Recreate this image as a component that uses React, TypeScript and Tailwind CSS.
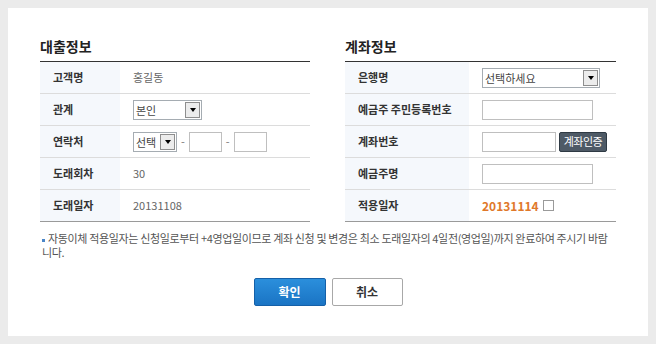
const font = { fontFamily: '"Noto Sans CJK KR", "Noto Sans", sans-serif' };

const Select = ({ label, width }: { label: string; width: string }) => (
  <div className={`flex h-[20px] ${width} items-stretch border border-[#a5acb2] bg-white`}>
    <span className="flex-1 pl-[2px] text-[11px] leading-[18px] text-[#444]">{label}</span>
    <span className="m-[1px] flex w-[15px] items-center justify-center border border-[#8e8e8e] bg-[#ececec]">
      <span className="border-x-[3.5px] border-t-[4px] border-x-transparent border-t-black" />
    </span>
  </div>
);

const Input = ({ width }: { width: string }) => (
  <div className={`h-[20px] ${width} border border-[#bfbfbf] bg-white`} />
);

const Row = ({ label, labelW, children }: { label: string; labelW: string; children?: React.ReactNode }) => (
  <div className="flex h-[32px] border-b border-[#dcdcdc] last:border-[#9a9a9a]">
    <div className={`${labelW} flex items-center bg-[#f5f8fc] pl-[13px] text-[11px] font-bold text-[#333]`}>{label}</div>
    <div className="flex flex-1 items-center pl-[13px] text-[11px] text-[#666]">{children}</div>
  </div>
);

export default function App() {
  return (
    <div className="h-[344px] w-[656px] bg-[#ebebeb] p-2" style={font}>
      <div className="h-[328px] w-[640px] bg-white pl-8 pt-[28px]">
        <div className="flex gap-[35px]">
          <section className="w-[270px]">
            <h2 className="mb-[5px] text-[14px] font-bold leading-[20px] text-[#222]">대출정보</h2>
            <div className="border-t border-[#333]">
              <Row label="고객명" labelW="w-[80px]">홍길동</Row>
              <Row label="관계" labelW="w-[80px]">
                <Select label="본인" width="w-[69px]" />
              </Row>
              <Row label="연락처" labelW="w-[80px]">
                <Select label="선택" width="w-[44px]" />
                <span className="mx-[4px] text-[#777]">-</span>
                <Input width="w-[33px]" />
                <span className="mx-[4px] text-[#777]">-</span>
                <Input width="w-[33px]" />
              </Row>
              <Row label="도래회차" labelW="w-[80px]">30</Row>
              <Row label="도래일자" labelW="w-[80px]">20131108</Row>
            </div>
          </section>
          <section className="w-[271px]">
            <h2 className="mb-[5px] text-[14px] font-bold leading-[20px] text-[#222]">계좌정보</h2>
            <div className="border-t border-[#333]">
              <Row label="은행명" labelW="w-[124px]">
                <Select label="선택하세요" width="w-[118px]" />
              </Row>
              <Row label="예금주 주민등록번호" labelW="w-[124px]">
                <Input width="w-[111px]" />
              </Row>
              <Row label="계좌번호" labelW="w-[124px]">
                <Input width="w-[74px]" />
                <button className="ml-[3px] h-[20px] w-[48px] rounded-[2px] border border-[#2f3a44] bg-[#4e5a66] text-[11px] tracking-[-0.5px] text-white">
                  계좌인증
                </button>
              </Row>
              <Row label="예금주명" labelW="w-[124px]">
                <Input width="w-[111px]" />
              </Row>
              <Row label="적용일자" labelW="w-[124px]">
                <span className="text-[12px] font-bold text-[#e0782a]">20131114</span>
                <span className="ml-[4px] h-[11px] w-[11px] border border-[#9a9a9a] bg-white" />
              </Row>
            </div>
          </section>
        </div>
        <p className="mt-[9px] w-[576px] pl-[2px] text-[11px] leading-[14px] tracking-[-0.35px] whitespace-nowrap text-[#555]">
          <span className="mr-[3px] inline-block h-[3px] w-[3px] align-middle bg-[#4a86c8]" />
          자동이체 적용일자는 신청일로부터 +4영업일이므로 계좌 신청 및 변경은 최소 도래일자의 4일전(영업일)까지 완료하여 주시기 바람
          <br />
          니다.
        </p>
        <div className="mt-[19px] flex justify-center gap-[6px] pr-8">
          <button className="h-[28px] w-[72px] rounded-[2px] border border-[#1560a8] bg-gradient-to-b from-[#2b8fdc] to-[#1a74c4] text-[12px] font-bold text-white">
            확인
          </button>
          <button className="h-[28px] w-[71px] rounded-[2px] border border-[#a8a8a8] bg-white text-[12px] font-bold text-[#333]">
            취소
          </button>
        </div>
      </div>
    </div>
  );
}
